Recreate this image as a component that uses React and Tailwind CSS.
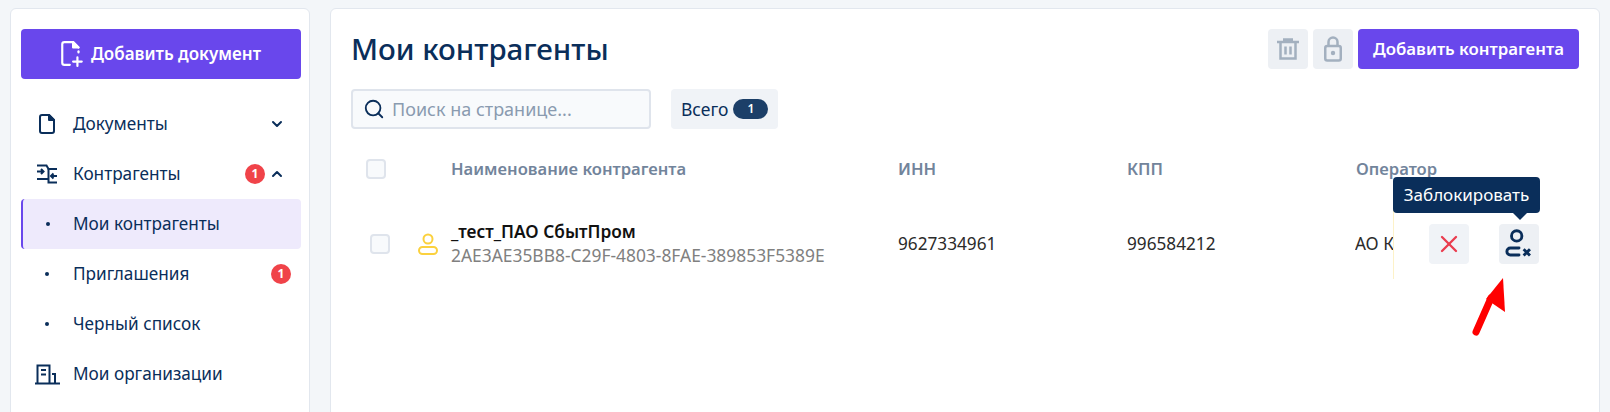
import { ChevronDown, ChevronUp, Search, X } from 'lucide-react';

const Badge = ({ className = '' }) => (
    <span className={`flex h-5 w-5 items-center justify-center rounded-full bg-[#f04349] text-xs font-bold text-white ${className}`}>1</span>
);

const FileIcon = () => (
    <svg width="16" height="20" viewBox="0 0 16 20" fill="none" stroke="#0a2e5a" strokeWidth="2" strokeLinejoin="round">
        <path d="M1 3a2 2 0 0 1 2-2h7l5 5v11a2 2 0 0 1-2 2H3a2 2 0 0 1-2-2z" />
        <path d="M10 1v5h5z" fill="#0a2e5a" />
    </svg>
);

const FileAddIcon = () => (
    <svg width="22" height="26" viewBox="0 0 20 24" fill="none" stroke="white" strokeWidth="2" strokeLinecap="round" strokeLinejoin="round">
        <path d="M8 22H3a2 2 0 0 1-2-2V3a2 2 0 0 1 2-2h8l5 5" />
        <path d="M11 1v5h5z" fill="white" />
        <path d="M16 9.500v1" />
        <path d="M15 15v8M11 19h8" />
    </svg>
);

const ContractorsIcon = () => (
    <svg width="20" height="20" viewBox="0 0 20 20" fill="none" stroke="#0a2e5a" strokeWidth="2">
        <path d="M0 1.500h9.500l2 3.500H20" />
        <path d="M11.500 5v13.500H20" />
        <path d="M0 15h11" />
        <path d="M0 7.500h5.500M4 5l2.500 2.500L4 10" />
        <path d="M20 12h-6M16.500 9.500 14 12l2.500 2.500" />
    </svg>
);

const BuildingIcon = () => (
    <svg width="25" height="21" viewBox="0 0 25 21" fill="none" stroke="#0a2e5a" strokeWidth="2">
        <path d="M0 19.500h25" />
        <path d="M2.500 19.500V1.500h12v18" />
        <path d="M6 6h5M6 10.500h5" />
        <path d="M17 10h3v9.500" />
    </svg>
);

const TrashIcon = () => (
    <svg width="22" height="22" viewBox="0 0 22 22" fill="none" stroke="#a3b0bf" strokeWidth="2.500">
        <path d="M0 4h22M6 1.500h10" />
        <path d="M3.500 4v16.500h15V4" />
        <path d="M8.500 8.500v8M13.500 8.500v8" />
    </svg>
);

const LockIcon = () => (
    <svg width="18" height="26" viewBox="0 0 18 26" fill="none" stroke="#a3b0bf" strokeWidth="2.500">
        <rect x="1.250" y="10" width="15.500" height="14.500" rx="2" />
        <path d="M4.500 10V6a4.500 4.500 0 0 1 9 0v4" />
        <circle cx="9" cy="17" r="2.200" fill="#a3b0bf" stroke="none" />
    </svg>
);

const MenuItem = ({ icon, label, right, active }) => (
    <div className={`flex h-[50px] items-center rounded-[4px] ${active ? 'border-l-2 border-[#6947ec] bg-[#eeeafc]' : ''}`}>
        <div className={`flex shrink-0 justify-center ${active ? 'w-[50px]' : 'w-[52px]'}`}>
            {icon || <span className="h-1 w-1 rounded-full bg-[#0a2e5a]" />}
        </div>
        <span className="text-[17.200px] text-[#0a2e5a]">{label}</span>
        <div className="ml-auto flex items-center">{right}</div>
    </div>
);

const Checkbox = () => (
    <span className="block h-5 w-5 rounded-[4px] border-2 border-[#dfe4ec] bg-[#f8fafc]" />
);

const App = () => {
    return (
        <div className="flex h-[412px] gap-5 overflow-hidden bg-[#f3f6f9] pl-[10px] pr-[10px] pt-[8px] font-['Noto_Sans',sans-serif]">
            {/* Sidebar */}
            <aside className="h-[420px] w-[300px] shrink-0 rounded-t-md border border-[#e2e7ee] bg-white pl-[10px] pr-2 pt-5">
                <button className="flex h-[50px] w-[280px] items-center justify-center gap-[8px] rounded-[4px] bg-[#6947ec] text-[17px] font-semibold text-white">
                    <FileAddIcon />
                    Добавить документ
                </button>
                <nav className="mt-5">
                    <MenuItem
                        icon={<FileIcon />}
                        label="Документы"
                        right={<ChevronDown size={16} strokeWidth={3} className="mr-4 text-[#0a2e5a]" />}
                    />
                    <MenuItem
                        icon={<ContractorsIcon />}
                        label="Контрагенты"
                        right={
                            <>
                                <Badge className="mr-[4px]" />
                                <ChevronUp size={16} strokeWidth={3} className="mr-4 text-[#0a2e5a]" />
                            </>
                        }
                    />
                    <MenuItem active label="Мои контрагенты" />
                    <MenuItem label="Приглашения" right={<Badge className="mr-[10px]" />} />
                    <MenuItem label="Черный список" />
                    <MenuItem icon={<BuildingIcon />} label="Мои организации" />
                </nav>
            </aside>

            {/* Main card */}
            <main className="h-[420px] min-w-0 flex-1 rounded-t-md border border-[#e2e7ee] bg-white pl-5 pr-5 pt-5">
                <div className="flex h-10 items-center">
                    <h1 className="text-[29.500px] font-medium text-[#0a2e5a]">Мои контрагенты</h1>
                    <div className="ml-auto flex gap-[5px]">
                        <button className="flex h-10 w-10 items-center justify-center rounded-[4px] bg-[#edf0f4]">
                            <TrashIcon />
                        </button>
                        <button className="flex h-10 w-10 items-center justify-center rounded-[4px] bg-[#edf0f4]">
                            <LockIcon />
                        </button>
                        <button className="h-10 w-[221px] rounded-[4px] bg-[#6947ec] text-[16.800px] font-semibold text-white">
                            Добавить контрагента
                        </button>
                    </div>
                </div>

                <div className="mt-5 flex h-10 gap-5">
                    <div className="flex w-[300px] items-center gap-[7px] rounded-[4px] border-2 border-[#dfe4ec] bg-[#f8fafc] pl-[10px]">
                        <Search size={22} strokeWidth={2} className="text-[#0a2e5a]" />
                        <span className="text-lg text-[#8a9bb0]">Поиск на странице...</span>
                    </div>
                    <div className="flex w-[107px] items-center gap-[5px] rounded-[4px] bg-[#f0f3f7] pl-[10px]">
                        <span className="text-[17.500px] text-[#0a2e5a]">Всего</span>
                        <span className="flex h-5 w-[35px] items-center justify-center rounded-full bg-[#1c3f68] text-xs font-semibold text-white">1</span>
                    </div>
                </div>

                <div className="mt-[30px] flex h-5 items-center text-[16.600px] font-semibold text-[#72849b]">
                    <div className="w-[100px] pl-[15px]"><Checkbox /></div>
                    <div className="w-[447px]">Наименование контрагента</div>
                    <div className="w-[229px]">ИНН</div>
                    <div className="w-[228px]">КПП</div>
                    <div className="pl-px">Оператор</div>
                </div>

                {/* Row */}
                <div className="mt-[45px] flex h-[40px] items-center text-[17.200px] text-[#2b2b2b]">
                    <div className="w-[48px] shrink-0 pl-[19px]"><Checkbox /></div>
                    <div className="flex w-[52px] shrink-0 justify-end pr-[12px]">
                        <svg width="22" height="24" viewBox="0 0 22 24" fill="none" stroke="#fbd13e" strokeWidth="2">
                            <circle cx="11" cy="7" r="4.500" />
                            <rect x="2" y="15" width="18" height="7" rx="3.500" />
                        </svg>
                    </div>
                    <div className="w-[447px] shrink-0">
                        <div className="text-[17.300px] font-semibold leading-[22px] text-[#111]">_тест_ПАО СбытПром</div>
                        <div className="text-[17.400px] leading-[24px] text-[#808080]">2AE3AE35BB8-C29F-4803-8FAE-389853F5389E</div>
                    </div>
                    <div className="w-[229px] shrink-0">9627334961</div>
                    <div className="w-[228px] shrink-0">996584212</div>
                    <div className="w-[38px] shrink-0 overflow-hidden whitespace-nowrap">АО К</div>

                    {/* Actions with tooltip */}
                    <div className="relative flex h-[70px] items-center gap-[30px] border-l border-[#fdf2c8] bg-white pl-[35px]">
                        <button className="flex h-10 w-10 items-center justify-center rounded-[4px] bg-[#f0f3f7] text-[#ea3d4f]">
                            <X size={28} strokeWidth={2} />
                        </button>
                        <button className="flex h-10 w-10 items-center justify-center rounded-[4px] bg-[#edf0f4]">
                            <svg width="28" height="30" viewBox="0 0 24 26" fill="none" stroke="#0a2e5a" strokeWidth="2.500">
                                <circle cx="10" cy="6" r="4.500" />
                                <path d="M12 16.500H4.500a3 3 0 0 0 0 6H12" strokeLinecap="round" />
                                <path d="M16 17.500l5.500 5.500M21.500 17.500 16 23" />
                            </svg>
                        </button>
                        <div className="absolute -top-[32px] left-[-1px] flex h-9 w-[147px] items-center justify-center rounded-[4px] bg-[#0a2e5a] text-[17px] text-white">
                            Заблокировать
                            <span className="absolute -bottom-[7px] right-3 h-0 w-0 border-x-8 border-t-8 border-x-transparent border-t-[#0a2e5a]" />
                        </div>
                    </div>
                </div>
            </main>

            {/* Red annotation arrow */}
            <svg className="absolute left-[1460px] top-[270px]" width="50" height="70" viewBox="0 0 50 70" fill="#ff0000" stroke="none">
                <path d="M16 62 31 28" stroke="#ff0000" strokeWidth="7" strokeLinecap="round" />
                <path d="M43 8 45 42 26 29z" />
            </svg>
        </div>
    );
};

export default App;
